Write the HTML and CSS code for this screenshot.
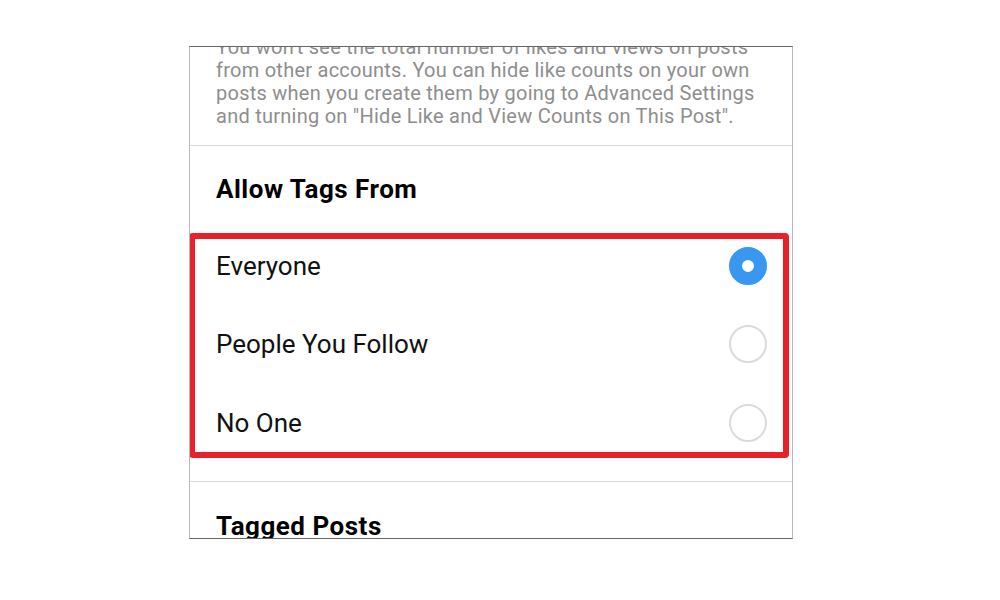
FILE: index.html
```html
<!DOCTYPE html>
<html lang="en">
<head>
  <meta charset="UTF-8">
  <meta name="viewport" content="width=device-width, initial-scale=1.0">
  <title>Allow Tags From</title>
  <link rel="stylesheet" href="styles.css">
</head>
<body>
  <div class="phone">
    <div class="screen">
      <p class="note">You won't see the total number of likes and views on posts from other accounts. You can hide like counts on your own posts when you create them by going to Advanced Settings and turning on "Hide Like and View Counts on This Post".</p>

      <div class="section">
        <h2>Allow Tags From</h2>
        <div class="options">
          <label class="option">
            <span>Everyone</span>
            <span class="radio checked"></span>
          </label>
          <label class="option">
            <span>People You Follow</span>
            <span class="radio"></span>
          </label>
          <label class="option">
            <span>No One</span>
            <span class="radio"></span>
          </label>
          <div class="highlight"></div>
        </div>
      </div>

      <div class="section tagged">
        <h2>Tagged Posts</h2>
      </div>
    </div>
  </div>
</body>
</html>
```

FILE: styles.css
```css
body {
  margin: 0;
  background-color: #fff;
  font-family: Roboto, "Liberation Sans", sans-serif;
}
.phone {
  width: 602px;
  height: 491px;
  margin: 46px 0 0 189px;
  border: 1px solid;
  border-color: #666 #b8b8b8;
  overflow: hidden;
}
.screen {
  padding: 0 25px 0 26px;
}
.note {
  margin: -11px -25px 0 -26px;
  padding: 0 25px 17px 26px;
  font-size: 20px;
  line-height: 23px;
  letter-spacing: 0.25px;
  color: #8e8e8e;
  border-bottom: 1px solid #dbdbdb;
}
.section {
  padding-top: 28px;
}
h2 {
  margin: 0;
  font-size: 26px;
  line-height: 30px;
  font-weight: 700;
  letter-spacing: 0.5px;
  color: #000;
}
.options {
  position: relative;
  margin: 22.5px -25px 0 -26px;
  padding: 0 25px 19px 26px;
  border-bottom: 1px solid #dbdbdb;
}
.option {
  display: flex;
  align-items: center;
  justify-content: space-between;
  height: 78.5px;
  font-size: 26px;
  color: #111;
}
.radio {
  width: 38px;
  height: 38px;
  border: 2px solid #dbdbdb;
  border-radius: 50%;
  box-sizing: border-box;
}
.radio.checked {
  border: 13px solid #3897f0;
  background-color: #fff;
}
.highlight {
  position: absolute;
  top: 6.5px;
  left: -1px;
  right: 3px;
  bottom: 23px;
  border: 6px solid #e8202a;
  border-radius: 4px;
}
.tagged {
  padding-top: 29px;
}
```
